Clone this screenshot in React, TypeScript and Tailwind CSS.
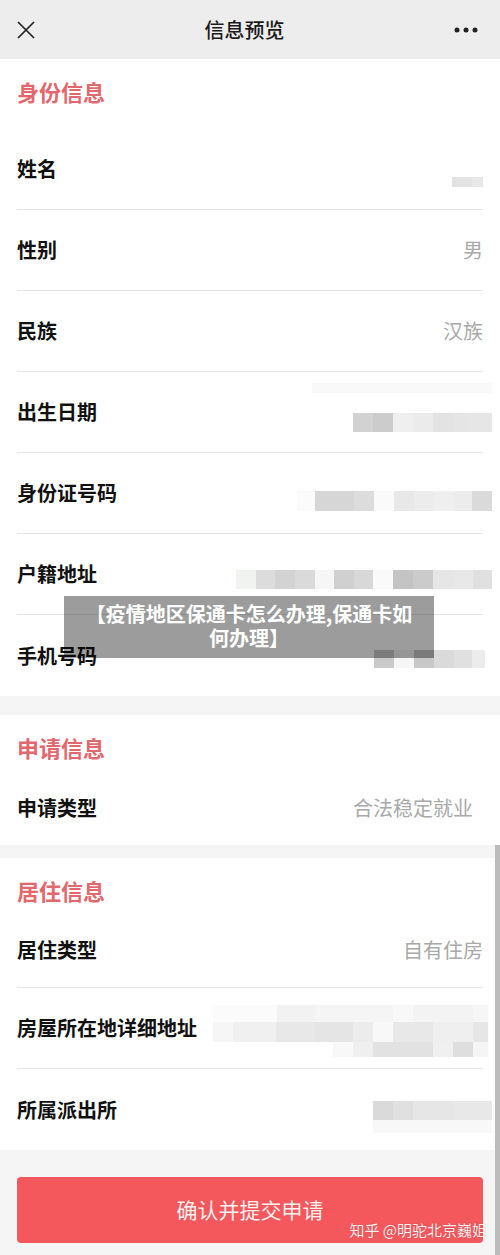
import React from "react";

type Block = { w: string; c: string };

const font = "font-['Noto_Sans_CJK_SC','Noto_Sans',sans-serif]";

function Pixels({ blocks, h }: { blocks: Block[]; h: string }) {
  return (
    <div className={`flex ${h}`}>
      {blocks.map((b, i) => (
        <div key={i} className={`${b.w} ${b.c} h-full`} />
      ))}
    </div>
  );
}

const birth: Block[] = [
  { w: "w-[20px]", c: "bg-[#d2d2d2]" },
  { w: "w-[20px]", c: "bg-[#cccccc]" },
  { w: "w-[20px]", c: "bg-[#efefef]" },
  { w: "w-[20px]", c: "bg-[#ebebeb]" },
  { w: "w-[20px]", c: "bg-[#e3e3e3]" },
  { w: "w-[17px]", c: "bg-[#e5e5e5]" },
  { w: "w-[22px]", c: "bg-[#e6e6e6]" },
];

const idNo: Block[] = [
  { w: "w-[18px]", c: "bg-[#fbfbfb]" },
  { w: "w-[39px]", c: "bg-[#d6d6d6]" },
  { w: "w-[20px]", c: "bg-[#dcdcdc]" },
  { w: "w-[20px]", c: "bg-[#fafafa]" },
  { w: "w-[20px]", c: "bg-[#e8e8e8]" },
  { w: "w-[20px]", c: "bg-[#ececec]" },
  { w: "w-[20px]", c: "bg-[#efefef]" },
  { w: "w-[18px]", c: "bg-[#ececec]" },
  { w: "w-[20px]", c: "bg-[#dadada]" },
];

const hukou: Block[] = [
  { w: "w-[20px]", c: "bg-[#f1f3f1]" },
  { w: "w-[19px]", c: "bg-[#dcdcdc]" },
  { w: "w-[20px]", c: "bg-[#d3d3d3]" },
  { w: "w-[20px]", c: "bg-[#dadada]" },
  { w: "w-[19px]", c: "bg-[#f6f6f6]" },
  { w: "w-[20px]", c: "bg-[#d0d0d0]" },
  { w: "w-[19px]", c: "bg-[#d8d8d8]" },
  { w: "w-[20px]", c: "bg-[#fafafa]" },
  { w: "w-[20px]", c: "bg-[#c4c4c4]" },
  { w: "w-[20px]", c: "bg-[#cbcbcb]" },
  { w: "w-[20px]", c: "bg-[#e6e6e6]" },
  { w: "w-[20px]", c: "bg-[#e8e8e8]" },
  { w: "w-[19px]", c: "bg-[#e0e0e0]" },
];

const phone: Block[] = [
  { w: "w-[20px]", c: "bg-[#cacaca]" },
  { w: "w-[20px]", c: "bg-[#f6f6f6]" },
  { w: "w-[20px]", c: "bg-[#c8c8c8]" },
  { w: "w-[20px]", c: "bg-[#dadada]" },
  { w: "w-[18px]", c: "bg-[#e0e0e0]" },
  { w: "w-[13px]", c: "bg-[#ececec]" },
];

const addr1: Block[] = [
  { w: "w-[64px]", c: "bg-[#fbfbfb]" },
  { w: "w-[38px]", c: "bg-[#f2f2f2]" },
  { w: "w-[78px]", c: "bg-[#f5f5f5]" },
  { w: "w-[20px]", c: "bg-[#f8f8f8]" },
  { w: "w-[60px]", c: "bg-[#f3f3f3]" },
  { w: "w-[15px]", c: "bg-[#f6f6f6]" },
];

const addr2: Block[] = [
  { w: "w-[20px]", c: "bg-[#f6f6f6]" },
  { w: "w-[43px]", c: "bg-[#f0f0f0]" },
  { w: "w-[38px]", c: "bg-[#e8e8e8]" },
  { w: "w-[39px]", c: "bg-[#e5e5e5]" },
  { w: "w-[20px]", c: "bg-[#ececec]" },
  { w: "w-[20px]", c: "bg-[#f8f8f8]" },
  { w: "w-[40px]", c: "bg-[#e8e8e8]" },
  { w: "w-[40px]", c: "bg-[#efefef]" },
  { w: "w-[15px]", c: "bg-[#e6e6e6]" },
];

const addr3: Block[] = [
  { w: "w-[20px]", c: "bg-[#f8f8f8]" },
  { w: "w-[20px]", c: "bg-[#efefef]" },
  { w: "w-[60px]", c: "bg-[#e2e2e2]" },
  { w: "w-[20px]", c: "bg-[#f0f0f0]" },
  { w: "w-[20px]", c: "bg-[#dedede]" },
  { w: "w-[15px]", c: "bg-[#f5f5f5]" },
];

const police: Block[] = [
  { w: "w-[20px]", c: "bg-[#dadada]" },
  { w: "w-[20px]", c: "bg-[#e0e0e0]" },
  { w: "w-[40px]", c: "bg-[#e6e6e6]" },
  { w: "w-[39px]", c: "bg-[#e8e8e8]" },
];

function SectionTitle({ children }: { children: React.ReactNode }) {
  return (
    <div className="h-[70px] flex items-center px-[17px] pb-[6px]">
      <h2 className="text-[22px] leading-[28px] font-bold text-[#e2686d]">{children}</h2>
    </div>
  );
}

function Row({
  label,
  children,
  last,
  className = "h-[81px] items-center",
}: {
  label: string;
  children?: React.ReactNode;
  last?: boolean;
  className?: string;
}) {
  return (
    <div
      className={`mx-[17px] flex justify-between ${className} ${
        last ? "" : "border-b border-[#e6e6e6]"
      }`}
    >
      <span className="text-[20px] leading-[26px] font-bold text-[#111]">{label}</span>
      {children}
    </div>
  );
}

const value = "text-[20px] leading-[26px] text-[#a9a9a9]";

export default function App() {
  return (
    <div className={`relative w-[500px] min-h-[1255px] bg-[#f5f5f5] ${font}`}>
      {/* header */}
      <header className="h-[59px] bg-[#ededed] flex items-center justify-between px-[17px]">
        <svg width="18" height="18" viewBox="0 0 18 18" className="mt-[1px]">
          <path d="M1 1 L17 17 M17 1 L1 17" stroke="#222" strokeWidth="1.7" />
        </svg>
        <h1 className="text-[20px] font-medium text-[#1a1a1a]">信息预览</h1>
        <svg width="24" height="6" viewBox="0 0 24 6" className="mr-[5px]">
          <circle cx="3" cy="3" r="2.5" fill="#222" />
          <circle cx="12" cy="3" r="2.5" fill="#222" />
          <circle cx="21" cy="3" r="2.5" fill="#222" />
        </svg>
      </header>

      {/* 身份信息 */}
      <section className="bg-white">
        <SectionTitle>身份信息</SectionTitle>
        <Row label="姓名">
          <div className="mt-[26px] flex h-[10px]">
            <div className="w-[20px] bg-[#e2e2e2]" />
            <div className="w-[11px] bg-[#e8e8e8]" />
          </div>
        </Row>
        <Row label="性别">
          <span className={value}>男</span>
        </Row>
        <Row label="民族">
          <span className={value}>汉族</span>
        </Row>
        <Row label="出生日期">
          <div className="flex flex-col items-end -mr-[9px] mb-[10px]">
            <div className="w-[180px] h-[10px] bg-[#f9f9f9]" />
            <div className="mt-[20px]">
              <Pixels blocks={birth} h="h-[19px]" />
            </div>
          </div>
        </Row>
        <Row label="身份证号码">
          <div className="-mr-[9px] mt-[15px]">
            <Pixels blocks={idNo} h="h-[20px]" />
          </div>
        </Row>
        <Row label="户籍地址">
          <div className="-mr-[9px] mt-[10px]">
            <Pixels blocks={hukou} h="h-[19px]" />
          </div>
        </Row>
        <Row label="手机号码" last>
          <div className="-mr-[2px] mt-[7px]">
            <Pixels blocks={phone} h="h-[18px]" />
          </div>
        </Row>
      </section>

      {/* 申请信息 */}
      <section className="bg-white mt-[19px]">
        <SectionTitle>申请信息</SectionTitle>
        <Row label="申请类型" last className="h-[60px] items-start pt-[10px]">
          <span className={`${value} pr-[10px]`}>合法稳定就业</span>
        </Row>
      </section>

      {/* 居住信息 */}
      <section className="bg-white mt-[13px]">
        <SectionTitle>居住信息</SectionTitle>
        <Row label="居住类型" className="h-[60px] items-start pt-[9px]">
          <span className={value}>自有住房</span>
        </Row>
        <Row label="房屋所在地详细地址">
          <div className="flex flex-col items-end -mr-[5px] mt-[5px]">
            <Pixels blocks={addr1} h="h-[17px]" />
            <Pixels blocks={addr2} h="h-[20px]" />
            <Pixels blocks={addr3} h="h-[15px]" />
          </div>
        </Row>
        <Row label="所属派出所" last>
          <div className="flex flex-col items-end -mr-[9px] mt-[15px]">
            <Pixels blocks={police} h="h-[19px]" />
            <div className="w-[119px] h-[13px] bg-[#f8f8f8]" />
          </div>
        </Row>
      </section>

      {/* submit */}
      <div className="px-[17px] pt-[27px] pb-[12px]">
        <button className="relative w-full h-[66px] rounded-[4px] bg-[#f4575c] text-[21px] text-[#fff0f0] flex items-center justify-center">
          确认并提交申请
          <span className="absolute right-[-4px] bottom-[4px] text-[15px] leading-[18px] text-white/90 [text-shadow:0_0_1px_rgba(0,0,0,0.3)]">
            知乎 @明驼北京巍姐
          </span>
        </button>
      </div>

      {/* scrollbar */}
      <div className="absolute right-0 top-[845px] bottom-0 w-[5px] bg-[#bcbcbc]" />

      {/* title overlay */}
      <div className="absolute left-[64px] top-[596px] w-[370px] h-[62px] bg-black/[0.39] px-[15px] flex items-center justify-center">
        <p className="text-center text-[20px] leading-[24px] font-bold text-white -mt-[2px]">
          【疫情地区保通卡怎么办理,保通卡如何办理】
        </p>
      </div>
    </div>
  );
}
